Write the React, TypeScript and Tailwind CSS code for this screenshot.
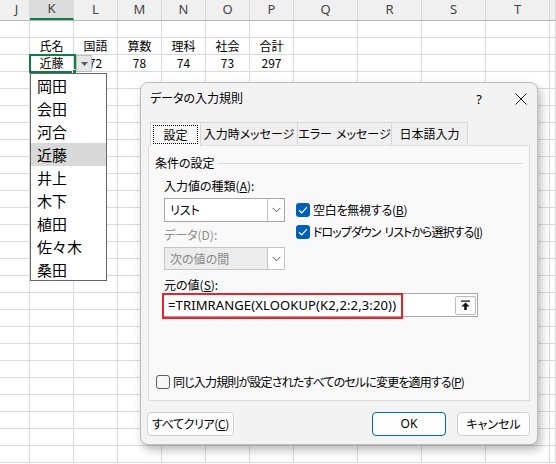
import React from 'react';

const COLS = [
    { id: 'J', w: 'w-[30px]' },
    { id: 'K', w: 'w-[44px]' },
    { id: 'L', w: 'w-[44px]' },
    { id: 'M', w: 'w-[44px]' },
    { id: 'N', w: 'w-[44px]' },
    { id: 'O', w: 'w-[44px]' },
    { id: 'P', w: 'w-[44px]' },
    { id: 'Q', w: 'w-[64px]' },
    { id: 'R', w: 'w-[64px]' },
    { id: 'S', w: 'w-[64px]' },
    { id: 'T', w: 'w-[64px]' },
    { id: 'U', w: 'w-[6px]' },
];

const ROWS: Record<number, Record<string, string>> = {
    1: { K: '氏名', L: '国語', M: '算数', N: '理科', O: '社会', P: '合計' },
    2: { K: '近藤', L: '72', M: '78', N: '74', O: '73', P: '297' },
};

const NAMES = ['岡田', '会田', '河合', '近藤', '井上', '木下', '植田', '佐々木', '桑田'];

function Chevron() {
    return (
        <svg width="9" height="6" viewBox="0 0 9 6" fill="none">
            <path d="M0.5 0.8 L4.5 4.8 L8.5 0.8" stroke="#555" strokeWidth="1" />
        </svg>
    );
}

function Check({ checked }: { checked: boolean }) {
    if (!checked) {
        return <span className="w-[14px] h-[14px] rounded-[3px] border border-[#5c5c5c] bg-[#f6f6f6] shrink-0" />;
    }
    return (
        <span className="w-[14px] h-[14px] rounded-[3px] bg-[#005fb8] shrink-0 flex items-center justify-center">
            <svg width="10" height="8" viewBox="0 0 10 8" fill="none">
                <path d="M1 4.2 L3.7 6.8 L9 1.2" stroke="#fff" strokeWidth="1.2" />
            </svg>
        </span>
    );
}

function Select({ value, disabled }: { value: string; disabled?: boolean }) {
    return (
        <div
            className={
                disabled
                    ? 'w-[121px] h-[23px] flex border border-[#c4c4c4] bg-[#ececec]'
                    : 'w-[121px] h-[24px] flex border border-[#a8a8a8] bg-white'
            }
        >
            <div className={disabled ? 'flex-1 pl-[5px] flex items-center text-[#8a8a8a]' : 'flex-1 pl-[5px] flex items-center'}>
                {value}
            </div>
            <div className="w-[17px] border-l border-[#c4c4c4] bg-white flex items-center justify-center">
                <Chevron />
            </div>
        </div>
    );
}

function Btn({ children, primary, w }: { children: React.ReactNode; primary?: boolean; w: string }) {
    return (
        <div
            className={
                (primary ? 'border-[#0067c0] ' : 'border-[#d0d0d0] ') +
                w +
                ' h-[24px] rounded-[4px] border bg-[#fdfdfd] flex items-center justify-center'
            }
        >
            {children}
        </div>
    );
}

export default function App() {
    return (
        <div className="relative w-[556px] h-[464px] overflow-hidden bg-white font-['Noto_Sans_CJK_JP',sans-serif] text-black [font-feature-settings:'palt']">
            {/* Column headers */}
            <div className="flex h-[21px] bg-[#f0f0f0] border-b border-[#b8b8b8]">
                {COLS.map(c => (
                    <div
                        key={c.id}
                        className={
                            c.w +
                            ' shrink-0 border-r border-[#d8d8d8] flex items-center justify-center text-[13px] font-["Noto_Sans",sans-serif] text-[#444] ' +
                            (c.id === 'K' ? 'bg-[#dcdcdc] border-b-2 border-b-[#107c41] text-[#333]' : '') +
                            (c.id === 'J' ? ' pl-[4px]' : '')
                        }
                    >
                        {c.id === 'U' ? '' : c.id}
                    </div>
                ))}
            </div>

            {/* Cells */}
            {Array.from({ length: 26 }).map((_, r) => (
                <div key={r} className="flex h-[17px] border-b border-[#dadada]">
                    {COLS.map(c => (
                        <div
                            key={c.id}
                            className={c.w + ' shrink-0 border-r border-[#dadada] flex items-center justify-center text-[12px] leading-none'}
                        >
                            {ROWS[r]?.[c.id] ?? ''}
                        </div>
                    ))}
                </div>
            ))}

            {/* Active cell */}
            <div className="absolute left-[29px] top-[54px] w-[47px] h-[19px] border-2 border-[#107c41]" />
            <div className="absolute left-[72px] top-[69px] w-[5px] h-[5px] bg-[#107c41] border border-white" />
            <div className="absolute left-[76px] top-[55px] w-[16px] h-[17px] bg-[#e6e6e6] border border-[#bdbdbd] flex items-center justify-center">
                <svg width="7" height="4" viewBox="0 0 7 4">
                    <path d="M0 0 H7 L3.5 4 Z" fill="#595959" />
                </svg>
            </div>

            {/* Dropdown list */}
            <div className="absolute left-[30px] top-[73px] w-[77px] h-[208px] bg-white border border-[#666] flex flex-col">
                {NAMES.map(n => (
                    <div
                        key={n}
                        className={(n === '近藤' ? 'bg-[#d9d9d9] ' : '') + 'h-[23px] shrink-0 pl-[6px] flex items-center text-[15px] leading-none [font-feature-settings:normal]'}
                    >
                        {n}
                    </div>
                ))}
            </div>

            {/* Dialog */}
            <div className="absolute left-[140px] top-[82px] w-[398px] h-[363px] rounded-[8px] bg-[#f3f3f3] border border-[#bdbdbd] shadow-[3px_5px_10px_rgba(0,0,0,0.28)] flex flex-col text-[12px] leading-[16px]">
                {/* Title bar */}
                <div className="h-[39px] flex items-start justify-between pl-[9px] pr-[10px] pt-[7px]">
                    <span>データの入力規則</span>
                    <div className="flex items-center gap-[33px] pt-[1px]">
                        <span className="text-[13px] font-['Noto_Sans',sans-serif]">?</span>
                        <svg width="12" height="12" viewBox="0 0 12 12">
                            <path d="M0.5 0.5 L11.5 11.5 M11.5 0.5 L0.5 11.5" stroke="#222" strokeWidth="1" />
                        </svg>
                    </div>
                </div>

                {/* Tabs */}
                <div className="flex h-[23px] ml-[9px] relative z-10">
                    <div className="w-[51px] h-[24px] bg-[#f9f9f9] border border-b-0 border-[#d6d6d6] p-[2px]">
                        <div className="h-full border border-dotted border-black flex items-center justify-center">設定</div>
                    </div>
                    <div className="w-[97px] border-t border-r border-[#d6d6d6] bg-[#f0f0f0] flex items-center justify-center">入力時メッセージ</div>
                    <div className="w-[94px] border-t border-r border-[#d6d6d6] bg-[#f0f0f0] flex items-center justify-center">
                        エラー<span className="ml-[4px]">メッセージ</span>
                    </div>
                    <div className="w-[76px] border-t border-r border-[#d6d6d6] bg-[#f0f0f0] flex items-center justify-center">日本語入力</div>
                </div>

                {/* Panel */}
                <div className="relative mx-[7px] h-[256px] bg-[#f9f9f9] border border-[#dcdcdc] flex flex-col pl-[6px] pr-[6px] pt-[9px]">
                    <div className="flex items-center gap-[3px]">
                        <span>条件の設定</span>
                        <div className="flex-1 h-px bg-[#d9d9d9]" />
                    </div>

                    <div className="flex mt-[7px] pl-[9px]">
                        <div className="flex flex-col">
                            <span>
                                入力値の種類(<span className="underline">A</span>):
                            </span>
                            <div className="mt-[4px]">
                                <Select value="リスト" />
                            </div>
                            <span className="mt-[5px] text-[#8a8a8a]">データ(D):</span>
                            <div className="mt-[4px]">
                                <Select value="次の値の間" disabled />
                            </div>
                        </div>
                        <div className="flex flex-col ml-[11px] pt-[24px] gap-[6px]">
                            <div className="flex items-center gap-[3px]">
                                <Check checked />
                                <span className="tracking-[-0.02em]">
                                    空白を無視する(<span className="underline">B</span>)
                                </span>
                            </div>
                            <div className="flex items-center gap-[3px]">
                                <Check checked />
                                <span className="tracking-[-0.08em]">
                                    ドロップダウン
                                    <span className="ml-[4px]">
                                        リストから選択する(<span className="underline">I</span>)
                                    </span>
                                </span>
                            </div>
                        </div>
                    </div>

                    <span className="mt-[7px] pl-[9px]">
                        元の値(<span className="underline">S</span>):
                    </span>
                    <div className="ml-[7px] mt-[0px] w-[316px] h-[24px] bg-white border border-[#a8a8a8] flex items-center pl-[5px] pr-[1px] font-['Noto_Sans',sans-serif] text-[13px] tracking-[0.01em] [font-feature-settings:normal]">
                        <span className="flex-1">=TRIMRANGE(XLOOKUP(K2,2:2,3:20))</span>
                        <div className="w-[21px] h-[19px] border border-[#bcbcbc] rounded-[2px] bg-[#fbfbfb] flex items-center justify-center">
                            <svg width="9" height="10" viewBox="0 0 9 10">
                                <path d="M0 0.5 H9 V1.8 H0 Z M4.5 2.6 L8.6 6.4 H5.8 V10 H3.2 V6.4 H0.4 Z" fill="#111" />
                            </svg>
                        </div>
                    </div>

                    <div className="mt-auto mb-[10px] flex items-center gap-[3px] pl-[1px]">
                        <Check checked={false} />
                        <span className="tracking-[-0.07em]">
                            同じ入力規則が設定されたすべてのセルに変更を適用する(<span className="underline">P</span>)
                        </span>
                    </div>

                    {/* Red highlight */}
                    <div className="absolute left-[13px] top-[147px] w-[241px] h-[26px] border-2 border-[#e8242a]" />
                </div>

                {/* Buttons */}
                <div className="flex items-center mt-[11px] pl-[6px] pr-[7px]">
                    <Btn w="w-[87px]">
                        <span className="tracking-[-0.03em]">
                            すべてクリア(<span className="underline">C</span>)
                        </span>
                    </Btn>
                    <div className="flex-1" />
                    <Btn w="w-[74px]" primary>
                        <span className="font-['Noto_Sans',sans-serif]">OK</span>
                    </Btn>
                    <div className="w-[11px]" />
                    <Btn w="w-[73px]">キャンセル</Btn>
                </div>
            </div>
        </div>
    );
}
